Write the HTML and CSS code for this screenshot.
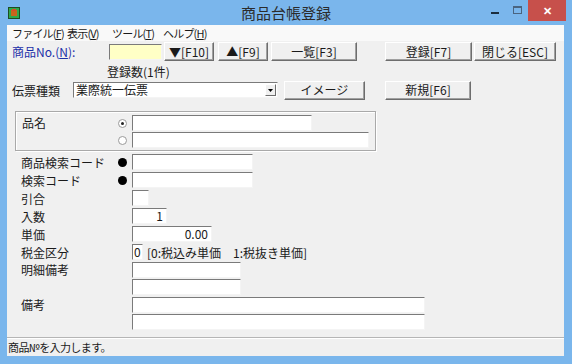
FILE: index.html
```html
<!DOCTYPE html>
<html lang="ja">
<head>
    <meta charset="UTF-8">
    <title>商品台帳登録</title>
    <link rel="stylesheet" href="styles.css">
</head>
<body>
    <div class="window">
        <div class="titlebar">
            <div class="title-left">
                <svg class="app-icon" width="12" height="12" viewBox="0 0 12 12">
                    <rect x="0.5" y="0.5" width="11" height="11" fill="#2fa84a" stroke="#1d4d22"/>
                    <rect x="3" y="3" width="6" height="6" fill="#c8651c"/>
                    <rect x="4" y="2" width="4" height="2" fill="#d94a2a"/>
                </svg>
            </div>
            <div class="title-text">商品台帳登録</div>
            <div class="title-controls">
                <span class="ctl-min"></span>
                <span class="ctl-max"></span>
                <span class="ctl-close">✕</span>
            </div>
        </div>

        <div class="client">
            <div class="menubar">
                <span class="menu-item m-file">ファイル(<u>F</u>)</span>
                <span class="menu-item m-view">表示(<u>V</u>)</span>
                <span class="menu-item m-tool">ツール(<u>T</u>)</span>
                <span class="menu-item m-help">ヘルプ(<u>H</u>)</span>
            </div>

            <div class="toolbar">
                <span class="code-label">商品No.(<u>N</u>):</span>
                <span class="input code-input"></span>
                <button class="btn btn-down" type="button">▼[F10]</button>
                <button class="btn btn-up" type="button">▲[F9]</button>
                <button class="btn btn-list" type="button">一覧[F3]</button>
                <button class="btn btn-save" type="button">登録[F7]</button>
                <button class="btn btn-close" type="button">閉じる[ESC]</button>
            </div>

            <div class="count-row">登録数(1件)</div>

            <div class="slip-row">
                <span class="slip-label">伝票種類</span>
                <span class="combo">
                    <span class="combo-text">業際統一伝票</span>
                    <span class="combo-arrow">
                        <svg width="5" height="3" viewBox="0 0 5 3"><path d="M0 0h5L2.5 3z" fill="#000"/></svg>
                    </span>
                </span>
                <button class="btn btn-image" type="button">イメージ</button>
                <button class="btn btn-new" type="button">新規[F6]</button>
            </div>

            <div class="groupbox">
                <span class="group-label">品名</span>
                <div class="group-lines">
                    <div class="group-line">
                        <span class="radio checked"></span>
                        <span class="input name-1"></span>
                    </div>
                    <div class="group-line">
                        <span class="radio"></span>
                        <span class="input name-2"></span>
                    </div>
                </div>
            </div>

            <div class="fields">
                <div class="row">
                    <span class="field-label">商品検索コード</span>
                    <span class="marker"><span class="dot"></span></span>
                    <span class="input w-code"></span>
                </div>
                <div class="row">
                    <span class="field-label">検索コード</span>
                    <span class="marker"><span class="dot"></span></span>
                    <span class="input w-code"></span>
                </div>
                <div class="row">
                    <span class="field-label">引合</span>
                    <span class="marker"></span>
                    <span class="input w-tiny"></span>
                </div>
                <div class="row">
                    <span class="field-label">入数</span>
                    <span class="marker"></span>
                    <span class="input w-qty num">1</span>
                </div>
                <div class="row">
                    <span class="field-label">単価</span>
                    <span class="marker"></span>
                    <span class="input w-price num">0.00</span>
                </div>
                <div class="row">
                    <span class="field-label">税金区分</span>
                    <span class="marker"></span>
                    <span class="input w-flag">0</span>
                    <span class="tax-note">[0:税込み単価　1:税抜き単価]</span>
                </div>
                <div class="row tight">
                    <span class="field-label">明細備考</span>
                    <span class="marker"></span>
                    <span class="input w-memo"></span>
                </div>
                <div class="row">
                    <span class="field-label"></span>
                    <span class="marker"></span>
                    <span class="input w-memo"></span>
                </div>
                <div class="row tight">
                    <span class="field-label">備考</span>
                    <span class="marker"></span>
                    <span class="input w-note"></span>
                </div>
                <div class="row">
                    <span class="field-label"></span>
                    <span class="marker"></span>
                    <span class="input w-note"></span>
                </div>
            </div>

            <div class="statusbar">商品№を入力します。</div>
        </div>
    </div>
</body>
</html>
```

FILE: styles.css
```css
body {
    margin: 0;
    font-family: "Noto Sans CJK JP", "Noto Sans", sans-serif;
    font-size: 12px;
    color: #1a1a1a;
    background: #7ab6ec;
}

.window {
    width: 572px;
    height: 364px;
    box-sizing: border-box;
    padding: 0 8px 8px 7px;
    background: #7ab6ec;
    display: flex;
    flex-direction: column;
}

/* title bar */
.titlebar {
    height: 25px;
    margin: 0 -8px 0 -7px;
    display: grid;
    grid-template-columns: 1fr auto 1fr;
    align-items: center;
}

.title-left {
    padding-left: 8px;
    display: flex;
    align-items: center;
}

.app-icon {
    display: block;
    margin-top: 1px;
}

.title-text {
    font-size: 15px;
    color: #2b2b2b;
    line-height: 25px;
}

.title-controls {
    display: flex;
    justify-content: flex-end;
    align-self: start;
    align-items: flex-start;
    padding-right: 6px;
}

.ctl-min {
    width: 8px;
    height: 2px;
    background: #1b2d3e;
    margin-top: 12px;
}

.ctl-max {
    width: 7px;
    height: 5px;
    border: 1px solid #4a6480;
    border-top-width: 2px;
    margin: 6px 0 0 14px;
}

.ctl-close {
    width: 38px;
    height: 21px;
    margin-left: 6px;
    background: #c7504b;
    color: #fff;
    font-size: 11px;
    font-weight: bold;
    text-align: center;
    line-height: 20px;
}

/* client area */
.client {
    flex: 1;
    background: #f0f0f0;
    display: flex;
    flex-direction: column;
}

.menubar {
    height: 16px;
    display: flex;
    padding-left: 5px;
    background: #f9f9f9;
    line-height: 16px;
    font-size: 11px;
    letter-spacing: -0.8px;
}

.menu-item {
    white-space: nowrap;
}

.m-file { width: 55px; }
.m-view { width: 45px; }
.m-tool { width: 51px; }

/* generic controls */
.input {
    display: block;
    box-sizing: border-box;
    height: 16px;
    background: #fff;
    border: 1px solid;
    border-color: #7a7a7a #f4f4f4 #f4f4f4 #7a7a7a;
    line-height: 14px;
    padding: 0 3px;
    white-space: nowrap;
}

.input.num {
    text-align: right;
}

.btn {
    box-sizing: border-box;
    height: 19px;
    padding: 0;
    font-family: inherit;
    font-size: 12px;
    color: #1a1a1a;
    background: #f0f0f0;
    border: 1px solid;
    border-color: #fff #6d6d6d #6d6d6d #fff;
    box-shadow: inset -1px -1px 0 #a0a0a0;
    line-height: 16px;
}

/* toolbar row */
.toolbar {
    display: flex;
    align-items: center;
    margin-top: 1px;
    height: 19px;
    padding-left: 5px;
}

.code-label {
    width: 97px;
    color: #1c2fa8;
}

.code-input {
    width: 53px;
    background: #ffffc6;
}

.btn-down { width: 50px; margin-left: 2px; }
.btn-up { width: 50px; margin-left: 4px; }
.btn-list { width: 86px; margin-left: 3px; }
.btn-save { width: 87px; margin-left: 28px; }
.btn-close { width: 82px; margin-left: 2px; }

.count-row {
    height: 20px;
    line-height: 22px;
    padding-left: 100px;
}

/* slip row */
.slip-row {
    display: flex;
    align-items: center;
    height: 18px;
    padding-left: 5px;
}

.slip-label {
    width: 61px;
}

.combo {
    box-sizing: border-box;
    width: 205px;
    height: 16px;
    display: flex;
    align-items: center;
    background: #fff;
    border: 1px solid;
    border-color: #7a7a7a #f4f4f4 #f4f4f4 #7a7a7a;
}

.combo-text {
    flex: 1;
    padding-left: 2px;
    line-height: 14px;
}

.combo-arrow {
    box-sizing: border-box;
    width: 11px;
    height: 12px;
    margin-right: 1px;
    display: flex;
    align-items: center;
    justify-content: center;
    background: #f0f0f0;
    border: 1px solid;
    border-color: #fff #6d6d6d #6d6d6d #fff;
}

.combo-arrow svg {
    display: block;
}

.btn-image { width: 81px; margin-left: 6px; }
.btn-new { width: 86px; margin-left: 20px; }

/* group box */
.groupbox {
    box-sizing: border-box;
    width: 361px;
    height: 40px;
    margin: 12px 0 0 8px;
    border: 1px solid #a9a9a9;
    box-shadow: inset 1px 1px 0 #fff, 1px 1px 0 #fff;
    display: flex;
    padding: 3px 0 0 6px;
}

.group-label {
    width: 96px;
    line-height: 16px;
}

.group-lines {
    display: flex;
    flex-direction: column;
    gap: 1px;
}

.group-line {
    display: flex;
    align-items: center;
}

.radio {
    box-sizing: border-box;
    width: 9px;
    height: 9px;
    margin: 0 5px 0 0;
    border-radius: 50%;
    border: 1px solid #9a9a9a;
    background: #fff;
    position: relative;
}

.radio.checked::after {
    content: "";
    position: absolute;
    left: 2px;
    top: 2px;
    width: 3px;
    height: 3px;
    border-radius: 50%;
    background: #222;
}

.name-1 { width: 180px; }
.name-2 { width: 237px; }

/* field rows */
.fields {
    margin-top: 2px;
    padding-left: 14px;
}

.row {
    display: flex;
    align-items: center;
    height: 18px;
}

.row.tight {
    height: 17px;
}

.field-label {
    width: 97px;
}

.marker {
    width: 14px;
    display: flex;
    align-items: center;
}

.dot {
    width: 9px;
    height: 9px;
    border-radius: 50%;
    background: #000;
}

.w-code { width: 121px; }
.w-tiny { width: 17px; }
.w-qty { width: 35px; }
.w-price { width: 80px; }
.w-flag { width: 11px; padding: 0 1px; }
.w-memo { width: 109px; }
.w-note { width: 293px; }

.tax-note {
    margin-left: 4px;
}

/* status bar */
.statusbar {
    margin-top: auto;
    height: 18px;
    border-top: 1px solid #b5b5b5;
    box-shadow: inset 0 1px 0 #fff;
    padding-left: 1px;
    line-height: 18px;
    font-size: 11px;
    letter-spacing: -0.6px;
}
```
